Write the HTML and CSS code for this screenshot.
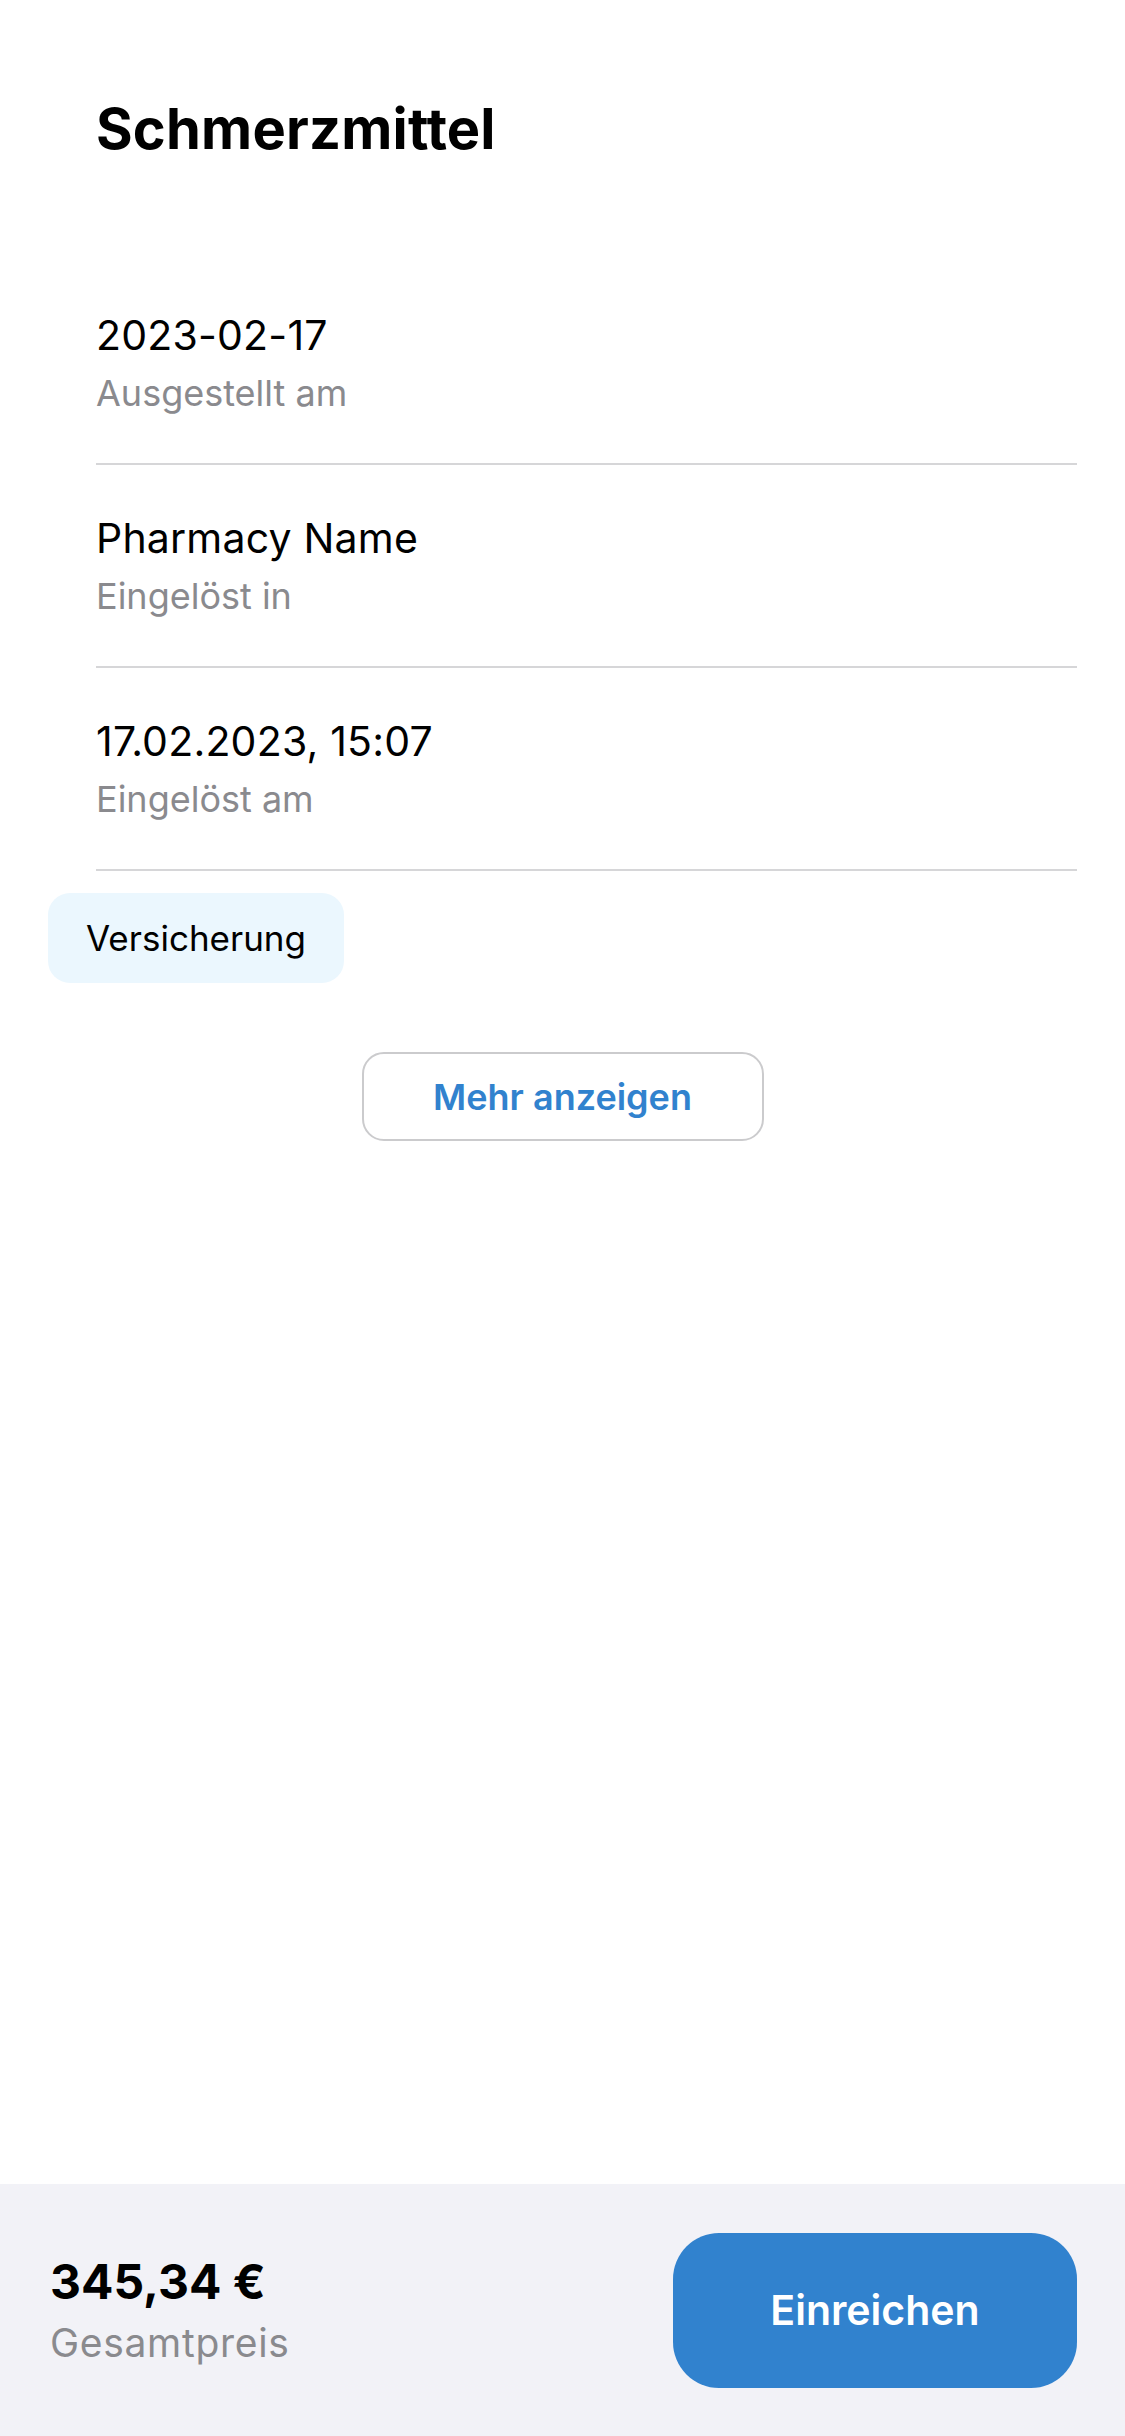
FILE: index.html
```html
<!DOCTYPE html>
<html lang="de">
<head>
<meta charset="utf-8">
<title>Schmerzmittel</title>
<link rel="stylesheet" href="styles.css">
</head>
<body>
<div class="page">
  <main class="content">
    <h1 class="title">Schmerzmittel</h1>
    <ul class="details">
      <li class="row">
        <span class="value">2023-02-17</span>
        <span class="label">Ausgestellt am</span>
      </li>
      <li class="row">
        <span class="value">Pharmacy Name</span>
        <span class="label">Eingelöst in</span>
      </li>
      <li class="row">
        <span class="value">17.02.2023, 15:07</span>
        <span class="label">Eingelöst am</span>
      </li>
    </ul>
    <div class="chips">
      <span class="chip">Versicherung</span>
    </div>
    <div class="more-wrap">
      <button class="more">Mehr anzeigen</button>
    </div>
  </main>
  <footer class="bottom-bar">
    <div class="total">
      <span class="price">345,34 €</span>
      <span class="price-label">Gesamtpreis</span>
    </div>
    <button class="submit">Einreichen</button>
  </footer>
</div>
</body>
</html>
```

FILE: styles.css
```css
* {
  box-sizing: border-box;
}

html, body {
  margin: 0;
  padding: 0;
  background: #ffffff;
}

body {
  font-family: Inter, "Noto Sans", sans-serif;
  color: #000000;
  width: 1125px;
}

.page {
  display: flex;
  flex-direction: column;
  min-height: 2436px;
}

.content {
  flex: 1;
  padding: 0 48px;
}

.title {
  margin: 0;
  padding: 96px 0 0 48px;
  font-size: 56px;
  line-height: 66px;
  font-weight: 700;
  letter-spacing: 0.2px;
}

.details {
  list-style: none;
  margin: 100px 0 0 48px;
  padding: 0;
}

.row {
  display: flex;
  flex-direction: column;
  gap: 10px;
  padding: 48px 0 48px;
  border-bottom: 2px solid #d6d6d8;
}

.value {
  font-size: 41px;
  line-height: 51px;
  font-weight: 400;
  letter-spacing: 0.2px;
  color: #000000;
}

.label {
  font-size: 36px;
  line-height: 44px;
  font-weight: 400;
  color: #8a8a8e;
}

.chips {
  display: flex;
  margin-top: 22px;
}

.chip {
  display: inline-flex;
  align-items: center;
  height: 90px;
  padding: 0 38px;
  border-radius: 22px;
  background: #ebf7fe;
  font-size: 35px;
  color: #000000;
}

.more-wrap {
  display: flex;
  justify-content: center;
  margin-top: 69px;
}

.more {
  width: 402px;
  height: 89px;
  border: 2px solid #cbcbcd;
  border-radius: 22px;
  background: #ffffff;
  font-family: Inter, "Noto Sans", sans-serif;
  font-size: 36px;
  font-weight: 600;
  color: #3182ce;
  padding: 0;
}

.bottom-bar {
  height: 252px;
  background: #f2f2f7;
  padding: 0 48px;
  display: flex;
  align-items: center;
  justify-content: space-between;
}

.total {
  display: flex;
  flex-direction: column;
  gap: 9px;
  padding-left: 2px;
}

.price {
  font-size: 48px;
  line-height: 56px;
  font-weight: 700;
  color: #000000;
}

.price-label {
  font-size: 39px;
  line-height: 48px;
  letter-spacing: 0.7px;
  color: #8a8a8e;
}

.submit {
  width: 404px;
  height: 155px;
  border: none;
  border-radius: 46px;
  background: #3182ce;
  color: #ffffff;
  font-family: Inter, "Noto Sans", sans-serif;
  font-size: 41px;
  font-weight: 600;
  padding: 0;
}
```
